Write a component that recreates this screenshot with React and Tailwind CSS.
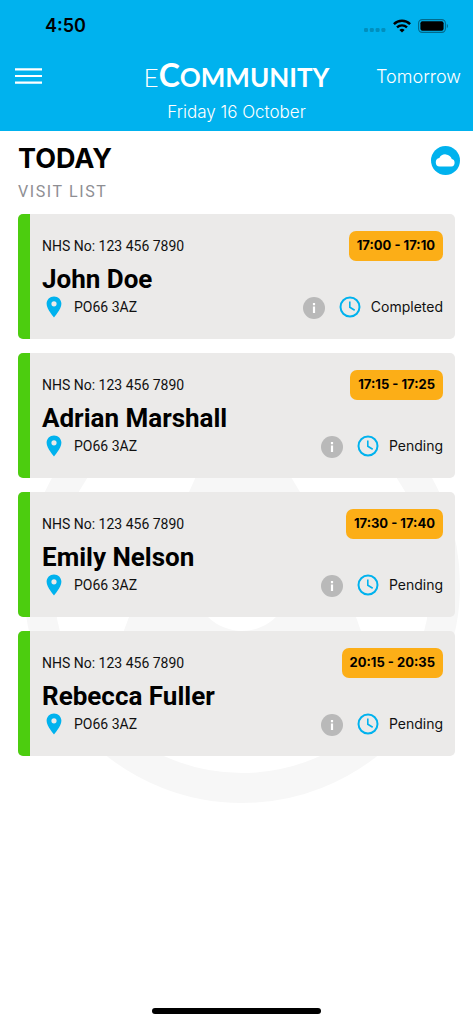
import React from "react";

const visits = [
  { name: "John Doe", time: "17:00 - 17:10", status: "Completed" },
  { name: "Adrian Marshall", time: "17:15 - 17:25", status: "Pending" },
  { name: "Emily Nelson", time: "17:30 - 17:40", status: "Pending" },
  { name: "Rebecca Fuller", time: "20:15 - 20:35", status: "Pending" },
];

function StatusBar() {
  return (
    <div className="flex h-[52px] items-center justify-between pl-[45px] pr-6">
      <span className="font-['Inter',sans-serif] text-[18px] leading-6 font-semibold text-black">4:50</span>
      <div className="flex items-center gap-[7px]">
        <svg className="mt-2" width="22" height="4" viewBox="0 0 22 4" fill="#008fbe" aria-hidden="true">
          <rect x="0" y="0" width="4" height="4" rx="1.2" />
          <rect x="5.8" y="0" width="4" height="4" rx="1.2" />
          <rect x="11.6" y="0" width="4" height="4" rx="1.2" />
          <rect x="17.4" y="0" width="4" height="4" rx="1.2" />
        </svg>
        <svg width="18" height="14" viewBox="0 0 18 14" fill="none" stroke="#000" strokeWidth="2.4" aria-hidden="true">
          <path d="M0.9 5.1a11.6 11.6 0 0 1 16.2 0" />
          <path d="M4 8.4a7.2 7.2 0 0 1 10 0" />
          <path d="M9 13.6 6.4 11a3.8 3.8 0 0 1 5.2 0z" fill="#000" stroke="none" />
        </svg>
        <svg width="31" height="14" viewBox="0 0 31 14" aria-hidden="true">
          <rect x="0.6" y="0.6" width="26.8" height="12.8" rx="3.6" fill="none" stroke="#00698b" strokeWidth="1.1" />
          <rect x="2.4" y="2.3" width="23.2" height="9.4" rx="2" fill="#000" />
          <path d="M28.8 4.8c1.6.8 1.6 3.6 0 4.4z" fill="#00698b" />
        </svg>
      </div>
    </div>
  );
}

function Watermark() {
  return (
    <svg
      className="absolute top-[236px] left-1/2 -z-10 ml-[-213px]"
      width="436"
      height="436"
      viewBox="0 0 436 436"
      fill="none"
      aria-hidden="true"
    >
      <circle cx="218" cy="218" r="203" stroke="#f7f7f7" strokeWidth="30" />
      <path
        fillRule="evenodd"
        fill="#f7f7f7"
        d="M218 76c-20 0-36 12-44 29L165 125 105 250 90 290H346L332 250 276 125 264 105c-9-17-26-29-46-29zM218 168a48 48 0 1 0 0 96a48 48 0 0 0 0-96z"
      />
    </svg>
  );
}

function VisitCard({ visit }) {
  return (
    <li className="flex h-[125px] overflow-hidden rounded-[5px] bg-[#ebeae9]">
      <div className="w-3 shrink-0 bg-[#4ccd0f]" />
      <div className="flex min-w-0 flex-1 flex-col px-3 pt-[17px]">
        <div className="flex items-center justify-between">
          <span className="text-[14px] leading-5 text-[#111]">NHS No: 123 456 7890</span>
          <span className="flex h-[30px] items-center rounded-[7px] bg-[#fcae17] px-2 font-['Inter',sans-serif] text-[13px] font-bold text-black">
            {visit.time}
          </span>
        </div>
        <h2 className="mt-[3px] text-[26px] leading-[30px] font-bold text-black">{visit.name}</h2>
        <div className="flex items-center justify-between">
          <div className="flex items-center gap-2">
            <svg width="24" height="24" viewBox="0 0 24 24" fill="#00b2ee" aria-hidden="true">
              <path d="M12 1.4c-4.2 0-7.4 3.2-7.4 7.4C4.6 14.3 12 22.4 12 22.4s7.4-8.1 7.4-13.6c0-4.2-3.2-7.4-7.4-7.4zm0 10a2.6 2.6 0 1 1 0-5.2 2.6 2.6 0 0 1 0 5.2z" />
            </svg>
            <span className="text-[14px] leading-5 text-[#111]">PO66 3AZ</span>
          </div>
          <div className="flex items-center">
            <button type="button" aria-label="Visit information" className="mt-[3px] mr-[14px]">
              <svg width="22" height="22" viewBox="0 0 22 22" aria-hidden="true">
                <circle cx="11" cy="11" r="11" fill="#b9b9b9" />
                <path d="M9.9 6h2.2v2.2H9.9zM9.9 9.6h2.2v6.4H9.9z" fill="#fff" />
              </svg>
            </button>
            <svg width="22" height="22" viewBox="0 0 22 22" fill="none" stroke="#00b2ee" aria-hidden="true">
              <circle cx="11" cy="11" r="9.5" strokeWidth="2" />
              <path d="M10.8 5.6v5.7l4.9 2.9" strokeWidth="1.6" />
            </svg>
            <span className="ml-[10px] font-['Inter',sans-serif] text-[14px] leading-5 text-[#111]">{visit.status}</span>
          </div>
        </div>
      </div>
    </li>
  );
}

export default function App() {
  return (
    <div className="relative isolate flex min-h-screen flex-col bg-white font-['Roboto',sans-serif]">
      <header className="h-[131px] bg-[#00b2ee] text-white">
        <StatusBar />
        <div className="grid grid-cols-[1fr_auto_1fr] items-center px-3">
          <button type="button" aria-label="Open menu" className="ml-[3px] justify-self-start">
            <svg width="27" height="16" viewBox="0 0 27 16" fill="#fff" aria-hidden="true">
              <path d="M0 .3h27v2.2H0zM0 7h27v2H0zM0 13.5h27v2.2H0z" />
            </svg>
          </button>
          <h1 className="font-['Lato',sans-serif] text-[26px] leading-[46px] font-bold whitespace-nowrap">
            <span className="font-light">E</span>
            <span className="text-[32px]">C</span>OMMUNITY
          </h1>
          <a href="#tomorrow" className="justify-self-end font-['Inter',sans-serif] text-[18px] font-light">
            Tomorrow
          </a>
        </div>
        <p className="text-center font-['Inter',sans-serif] text-[17px] leading-6 font-light">Friday 16 October</p>
      </header>

      <main className="relative flex-1 px-[18px]">
        <Watermark />
        <div className="flex items-start justify-between pt-3">
          <div>
            <p className="font-['Inter',sans-serif] text-[27px] leading-8 font-bold text-black">TODAY</p>
            <p className="mt-[5px] text-[16px] leading-6 tracking-widest text-[#8e8e93]">VISIT LIST</p>
          </div>
          <button type="button" aria-label="Sync" className="mt-[3px] mr-[-5px]">
            <svg width="29" height="29" viewBox="0 0 29 29" aria-hidden="true">
              <circle cx="14.5" cy="14.5" r="14.5" fill="#00b2ee" />
              <path d="M8.6 20.5a4.3 4.3 0 0 1-.3-8.5 6.8 6.8 0 0 1 12.5 1.1 3.8 3.8 0 0 1-.3 7.4z" fill="#fff" />
            </svg>
          </button>
        </div>
        <ul className="mt-[10px] flex flex-col gap-[14px]">
          {visits.map((visit) => (
            <VisitCard key={visit.name} visit={visit} />
          ))}
        </ul>
      </main>

      <footer className="flex h-5 justify-center pt-1">
        <div className="h-[6px] w-[169px] rounded-full bg-black" />
      </footer>
    </div>
  );
}
